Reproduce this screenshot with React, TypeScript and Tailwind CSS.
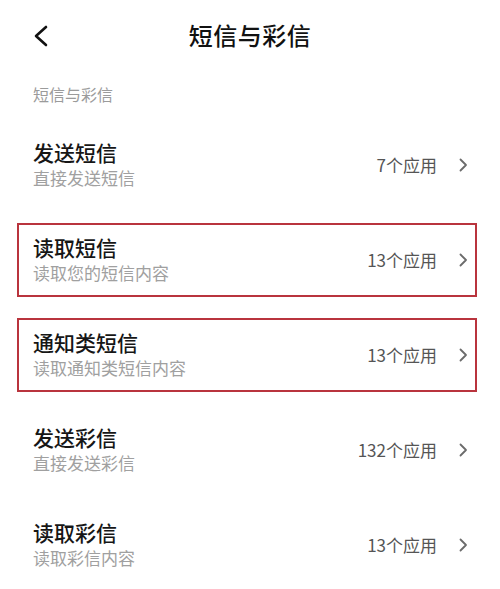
import React from 'react';

interface Row {
  title:    string;
  sub:      string;
  count:    string;
  boxed:    boolean;
}

const ROWS: Row[] = [
  { title: '发送短信',   sub: '直接发送短信',     count: '7个应用',   boxed: false },
  { title: '读取短信',   sub: '读取您的短信内容', count: '13个应用',  boxed: true  },
  { title: '通知类短信', sub: '读取通知类短信内容', count: '13个应用', boxed: true  },
  { title: '发送彩信',   sub: '直接发送彩信',     count: '132个应用', boxed: false },
  { title: '读取彩信',   sub: '读取彩信内容',     count: '13个应用',  boxed: false },
];

const FONT = "font-['Noto_Sans_CJK_SC','Noto_Sans',sans-serif]";

function Chevron() {
  return (
    <svg width="9" height="14" viewBox="0 0 9 14" className="flex-shrink-0">
      <path d="M1.5 1.5 L7 7 L1.5 12.5" fill="none" stroke="#6b6b6b" strokeWidth="1.8" strokeLinecap="round" strokeLinejoin="round" />
    </svg>
  );
}

export default function App() {
  return (
    <div className={`w-[500px] h-[589px] bg-white overflow-hidden ${FONT}`}>

      {/* Header */}
      <div className="relative h-[70px] flex items-center justify-center">
        <svg width="16" height="22" viewBox="0 0 16 22" className="absolute left-[33px] top-[25px]">
          <path d="M13 2 L3 11 L13 20" fill="none" stroke="#111" strokeWidth="2.6" strokeLinecap="round" strokeLinejoin="round" />
        </svg>
        <span className="text-[24px] leading-none font-medium text-[#111] tracking-[0.5px]">短信与彩信</span>
      </div>

      {/* Section */}
      <div className="h-[47px] flex items-center px-[33px]">
        <span className="text-[16px] leading-none text-[#9b9b9b]">短信与彩信</span>
      </div>

      {/* Rows */}
      {ROWS.map(row => (
        <div key={row.title} className="h-[95px] flex items-center">
          <div className={`flex-1 flex items-center ${
            row.boxed
              ? 'ml-[17px] mr-[23px] h-[74px] border-2 border-[#b9343d] pl-[14px] pr-[7px]'
              : 'pl-[33px] pr-[32px] h-full'
          }`}>
            <div className="flex-1 min-w-0">
              <div className="text-[21px] leading-[27px] font-medium text-[#161616]">{row.title}</div>
              <div className="text-[17px] leading-[24px] text-[#a0a0a0]">{row.sub}</div>
            </div>
            <span className="text-[17px] leading-none text-[#555] mr-[22px]">{row.count}</span>
            <Chevron />
          </div>
        </div>
      ))}
    </div>
  );
}
